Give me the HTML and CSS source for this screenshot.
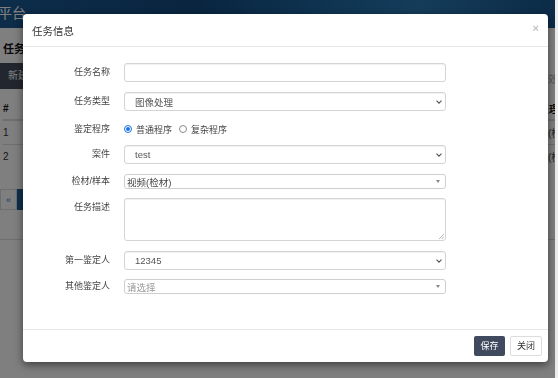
FILE: index.html
```html
<!DOCTYPE html>
<html>

<head lang="zh-CN">
    <meta charset="UTF-8">
    <title>任务信息</title>
    <link rel="stylesheet" href="styles.css">
</head>

<body>

    <div class="page">
        <div class="topbar"><span class="brand">平台</span></div>
        <div class="content">
            <h2 class="page-title">任务</h2>
            <div class="toolbar">
                <span class="btn-new">新建</span>
                <span class="toolbar-hint">时效</span>
            </div>
            <table class="grid">
                <colgroup>
                    <col class="col-no">
                    <col>
                    <col class="col-last">
                </colgroup>
                <tr>
                    <th>#</th>
                    <th></th>
                    <th class="last">处理</th>
                </tr>
                <tr>
                    <td>1</td>
                    <td></td>
                    <td class="last">(检材)</td>
                </tr>
                <tr>
                    <td>2</td>
                    <td></td>
                    <td class="last">(检材)</td>
                </tr>
            </table>
            <div class="pager">
                <span class="pager-item">«</span>
                <span class="pager-item active">1</span>
            </div>
            <div class="panel-line"></div>
        </div>
    </div>

    <div class="backdrop"></div>

    <!-- 任务信息弹窗 -->
    <div class="modal">
        <div class="modal-header">
            <span class="modal-title">任务信息</span>
            <span class="close">×</span>
        </div>

        <div class="modal-body">
            <div class="form-row">
                <label class="form-label">任务名称</label>
                <div class="form-control"></div>
            </div>
            <div class="form-row">
                <label class="form-label">任务类型</label>
                <div class="form-control select">
                    <span>图像处理</span>
                    <svg class="chevron" width="6" height="4" viewBox="0 0 6 4"><path d="M0.5 0.6 L3 3.2 L5.5 0.6" fill="none" stroke="#555" stroke-width="1.1"/></svg>
                </div>
            </div>
            <div class="form-row radios">
                <label class="form-label">鉴定程序</label>
                <div class="radio-group">
                    <span class="radio checked"></span><span class="radio-text">普通程序</span>
                    <span class="radio"></span><span class="radio-text">复杂程序</span>
                </div>
            </div>
            <div class="form-row">
                <label class="form-label">案件</label>
                <div class="form-control select">
                    <span>test</span>
                    <svg class="chevron" width="6" height="4" viewBox="0 0 6 4"><path d="M0.5 0.6 L3 3.2 L5.5 0.6" fill="none" stroke="#555" stroke-width="1.1"/></svg>
                </div>
            </div>
            <div class="form-row row-s2">
                <label class="form-label">检材/样本</label>
                <div class="select2">
                    <span>视频(检材)</span>
                    <span class="s2-arrow"></span>
                </div>
            </div>
            <div class="form-row row-top">
                <label class="form-label">任务描述</label>
                <div class="form-control textarea">
                    <svg class="grip" width="6" height="6" viewBox="0 0 6 6"><path d="M1 6 L6 1 M3.5 6 L6 3.5" stroke="#aaa" stroke-width="0.8"/></svg>
                </div>
            </div>
            <div class="form-row row-tight">
                <label class="form-label">第一鉴定人</label>
                <div class="form-control select">
                    <span>12345</span>
                    <svg class="chevron" width="6" height="4" viewBox="0 0 6 4"><path d="M0.5 0.6 L3 3.2 L5.5 0.6" fill="none" stroke="#555" stroke-width="1.1"/></svg>
                </div>
            </div>
            <div class="form-row">
                <label class="form-label">其他鉴定人</label>
                <div class="select2">
                    <span class="placeholder">请选择</span>
                    <span class="s2-arrow"></span>
                </div>
            </div>
        </div>

        <div class="modal-footer">
            <a href="javascript:void(0);" class="btn btn-save">保存</a>
            <a href="javascript:void(0);" class="btn btn-close">关闭</a>
        </div>
    </div>

</body>

</html>
```

FILE: styles.css
```css
html,
body,
div,
span,
h2,
table,
th,
td,
a,
label {
    padding: 0px;
    margin: 0px;
}

body {
    width: 558px;
    height: 378px;
    overflow: hidden;
    background: #ececec;
    font-family: "Liberation Sans", "Noto Sans CJK SC", sans-serif;
    color: #333;
}

a {
    text-decoration: none;
}

/* 底层页面 */
.page {
    width: 555px;
    height: 378px;
    background: #ffffff;
    overflow: hidden;
}

.topbar {
    height: 28px;
    background: linear-gradient(100deg, #1b5b95 0%, #134a80 35%, #1e6aa6 60%, #2a79b3 75%, #175690 100%);
    color: #ffffff;
    font-size: 14px;
    line-height: 26px;
    white-space: nowrap;
}

.brand {
    display: inline-block;
    margin-left: -2px;
}

.content {
    padding-left: 3px;
}

.page-title {
    margin-top: 13px;
    font-size: 11px;
    line-height: 16px;
    font-weight: bold;
    color: #111;
}

.toolbar {
    margin-top: 6px;
    height: 26px;
    display: flex;
    justify-content: space-between;
    align-items: center;
}

.btn-new {
    margin-left: -3px;
    height: 26px;
    line-height: 26px;
    padding: 0 20px 0 8px;
    background: #454d5d;
    color: #ffffff;
    font-size: 10px;
}

.toolbar-hint {
    margin-right: -3px;
    margin-top: 5px;
    font-size: 10px;
    color: #aaa;
    white-space: nowrap;
}

.grid {
    margin-top: 8px;
    width: 552px;
    table-layout: fixed;
    border-collapse: collapse;
    font-size: 10px;
}

.col-no {
    width: 30px;
}

.col-last {
    width: 16px;
}

.grid th,
.grid td {
    height: 23px;
    text-align: left;
    white-space: nowrap;
    overflow: visible;
    border-top: 1px solid #dddddd;
}

.grid th {
    height: 22px;
    border-top: none;
    border-bottom: 2px solid #dddddd;
    color: #111;
}

.grid td.last {
    padding-left: 9px;
    color: #444;
}

.pager {
    margin-top: 21px;
    display: flex;
    margin-left: -3px;
}

.pager-item {
    width: 17px;
    height: 21px;
    line-height: 21px;
    text-align: center;
    font-size: 9px;
    color: #337ab7;
    border: 1px solid #dddddd;
    box-sizing: border-box;
}

.pager-item.active {
    width: 24px;
    background: #1f5e9a;
    border-color: #1f5e9a;
    color: #ffffff;
}

.panel-line {
    margin-top: 29px;
    margin-left: -3px;
    height: 1px;
    background: #dddddd;
}

/* 遮罩 */
.backdrop {
    position: fixed;
    top: 0px;
    left: 0px;
    right: 3px;
    bottom: 0px;
    background: #000000;
    opacity: 0.5;
}

/* 弹窗 */
.modal {
    position: absolute;
    left: 23px;
    top: 14px;
    width: 525px;
    height: 348px;
    background: #ffffff;
    border-radius: 4px;
    box-shadow: 0px 3px 8px rgba(0, 0, 0, 0.5);
    display: flex;
    flex-direction: column;
    font-family: "Liberation Sans", "Noto Sans CJK SC", sans-serif;
}

.modal-header {
    height: 33px;
    box-sizing: border-box;
    border-bottom: 1px solid #e8e8e8;
    display: flex;
    justify-content: space-between;
    align-items: center;
    padding: 0px 9px;
}

.modal-title {
    font-size: 10.5px;
    color: #333;
}

.close {
    margin-top: -5px;
    font-size: 11px;
    font-weight: bold;
    color: #c4c4c4;
}

.modal-body {
    flex: 1;
    padding-top: 16px;
}

.form-row {
    display: flex;
    align-items: center;
    margin-bottom: 10px;
}

.form-row.radios {
    height: 16px;
    margin-bottom: 8px;
}

.form-row.row-s2,
.form-row.row-tight {
    margin-bottom: 9px;
}

.form-row.row-top {
    align-items: flex-start;
}

.row-top .form-label {
    padding-top: 3px;
}

.form-label {
    flex: none;
    width: 87px;
    margin-right: 14px;
    text-align: right;
    font-size: 9px;
    line-height: 13px;
    color: #444;
}

.form-control {
    width: 322px;
    height: 19px;
    box-sizing: border-box;
    border: 1px solid #d4d4d4;
    border-radius: 3px;
    box-shadow: inset 0px 1px 1px rgba(0, 0, 0, 0.06);
    display: flex;
    align-items: center;
    padding: 0px 10px;
    font-size: 9.5px;
    color: #555;
}

.form-control.select {
    justify-content: space-between;
    padding-right: 3px;
}

.form-control.textarea {
    height: 43px;
    position: relative;
}

.grip {
    position: absolute;
    right: 1px;
    bottom: 1px;
}

.radio-group {
    display: flex;
    align-items: center;
    font-size: 9px;
    color: #444;
}

.radio {
    width: 8px;
    height: 8px;
    box-sizing: border-box;
    border: 1px solid #8a8a8a;
    border-radius: 50%;
    margin-right: 4px;
    position: relative;
}

.radio.checked {
    border-color: #1a73e8;
}

.radio.checked::after {
    content: "";
    position: absolute;
    left: 1px;
    top: 1px;
    width: 4px;
    height: 4px;
    border-radius: 50%;
    background: #1a73e8;
}

.radio-text {
    margin-right: 7px;
}

.select2 {
    width: 322px;
    height: 15px;
    box-sizing: border-box;
    border: 1px solid #cfcfcf;
    border-radius: 3px;
    display: flex;
    justify-content: space-between;
    align-items: center;
    padding: 0px 5px 0px 2px;
    font-size: 9.5px;
    color: #444;
}

.select2 .placeholder {
    color: #999;
}

.s2-arrow {
    width: 0px;
    height: 0px;
    border-left: 2.5px solid transparent;
    border-right: 2.5px solid transparent;
    border-top: 3px solid #888;
}

.modal-footer {
    height: 33px;
    box-sizing: border-box;
    border-top: 1px solid #e8e8e8;
    display: flex;
    justify-content: flex-end;
    align-items: center;
    padding-right: 6px;
    gap: 5px;
}

.btn {
    display: block;
    height: 20px;
    line-height: 20px;
    box-sizing: border-box;
    text-align: center;
    font-size: 9px;
    border-radius: 2px;
}

.btn-save {
    width: 31px;
    background: #3f4a5e;
    color: #ffffff;
}

.btn-close {
    width: 32px;
    line-height: 18px;
    border: 1px solid #dddddd;
    background: #ffffff;
    color: #333;
}
```
